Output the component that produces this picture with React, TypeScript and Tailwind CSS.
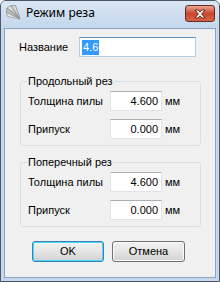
import React from "react";

const ui = { fontFamily: '"Liberation Sans", Arial, sans-serif' };

function SawIcon() {
  return (
    <svg width="15" height="15" viewBox="0 0 15 15">
      <defs>
        <linearGradient id="fan" x1="0" y1="0" x2="1" y2="1">
          <stop offset="0" stopColor="#f4f4f4" />
          <stop offset="1" stopColor="#9a9a9a" />
        </linearGradient>
      </defs>
      <path d="M14 14 L1 3 A14 14 0 0 1 5 0.8 Z" fill="url(#fan)" stroke="#8c8c8c" strokeWidth="0.8" />
      <path d="M14 14 L5 0.8 A14 14 0 0 1 9.5 0.4 Z" fill="#d8d8d8" stroke="#8c8c8c" strokeWidth="0.8" />
      <path d="M14 14 L1 3 L0.4 7.5 Z" fill="#bdbdbd" stroke="#8c8c8c" strokeWidth="0.8" />
      <path d="M14 14 L0.4 7.5 L1.5 11.5 Z" fill="#e6e6e6" stroke="#9c9c9c" strokeWidth="0.8" />
    </svg>
  );
}

function CloseGlyph() {
  return (
    <svg width="14" height="10" viewBox="0 0 14 10">
      <path
        d="M2 1 L5 1 L7 3.2 L9 1 L12 1 L8.6 5 L12 9 L9 9 L7 6.8 L5 9 L2 9 L5.4 5 Z"
        fill="#ffffff"
        stroke="#5a1e12"
        strokeWidth="0.9"
        strokeLinejoin="round"
      />
    </svg>
  );
}

function Field({ label, value }: { label: string; value: string }) {
  return (
    <div className="flex items-center h-[20px]">
      <span className="w-[82px] text-[11px] leading-[13px] text-black">{label}</span>
      <div className="w-[52px] h-[20px] bg-white border border-[#e2e3ea] border-t-[#abadb3] flex items-center justify-end pr-[3px] text-[11px] text-black">
        {value}
      </div>
      <span className="ml-[3px] text-[11px] text-black">мм</span>
    </div>
  );
}

function Group({ title, top }: { title: string; top: string }) {
  return (
    <fieldset className={`ml-[15px] w-[181px] border border-[#d5dfe5] rounded-[3px] pb-[6px] ${top}`}>
      <legend className="ml-[6px] px-[1px] text-[11px] leading-[13px] text-black">{title}</legend>
      <div className="flex flex-col gap-[8px] mt-[3px] pl-[7px]">
        <Field label="Толщина пилы" value="4.600" />
        <Field label="Припуск" value="0.000" />
      </div>
    </fieldset>
  );
}

export default function App() {
  return (
    <div className="w-[220px] h-[282px] flex flex-col border border-[#4c5664] rounded-t-[6px] bg-[#c4d7ec] overflow-hidden" style={ui}>
      {/* заголовок окна */}
      <div className="h-[27px] flex items-start bg-gradient-to-b from-[#d9e6f4] to-[#c4d7ec]">
        <div className="ml-[5px] mt-[4px]">
          <SawIcon />
        </div>
        <span
          className="ml-[5px] mt-[4px] text-[12px] leading-[16px] text-black"
          style={{ fontFamily: '"Noto Sans", "Open Sans", sans-serif' }}
        >
          Режим реза
        </span>
        <div className="ml-auto mr-[4px] mt-[4px] w-[30px] h-[17px] rounded-[3px] border border-[#6b2a1d] bg-gradient-to-b from-[#e9a594] via-[#c9472d] to-[#d7654a] flex items-center justify-center">
          <CloseGlyph />
        </div>
      </div>

      {/* клиентская область */}
      <div className="flex-1 mx-[3px] mb-[3px] border border-[#8aa3bf] bg-[#f0f0f0] flex flex-col">
        <div className="mt-[8px] flex items-center pl-[14px]">
          <span className="w-[60px] text-[11px] text-black">Название</span>
          <div className="w-[117px] h-[20px] bg-white border border-[#b5cfe7] border-t-[#5c93bf] flex items-center pl-[2px]">
            <span className="bg-[#3399ff] text-white text-[11px] leading-[15px] px-[1px]">4.6</span>
          </div>
        </div>

        <Group title="Продольный рез" top="mt-[18px]" />
        <Group title="Поперечный рез" top="mt-[10px]" />

        <div className="mt-[14px] flex pl-[27px] gap-[8px]">
          <button className="w-[72px] h-[21px] rounded-[3px] border border-[#3c7fb1] shadow-[inset_0_0_0_1px_#48d8fb] bg-gradient-to-b from-[#f2f2f2] via-[#e5e5e5] to-[#d2d2d2] text-[11px] text-black">
            OK
          </button>
          <button className="w-[73px] h-[21px] rounded-[3px] border border-[#707070] shadow-[inset_0_0_0_1px_#fcfcfc] bg-gradient-to-b from-[#f2f2f2] via-[#e5e5e5] to-[#d2d2d2] text-[11px] text-black">
            Отмена
          </button>
        </div>
      </div>
    </div>
  );
}
